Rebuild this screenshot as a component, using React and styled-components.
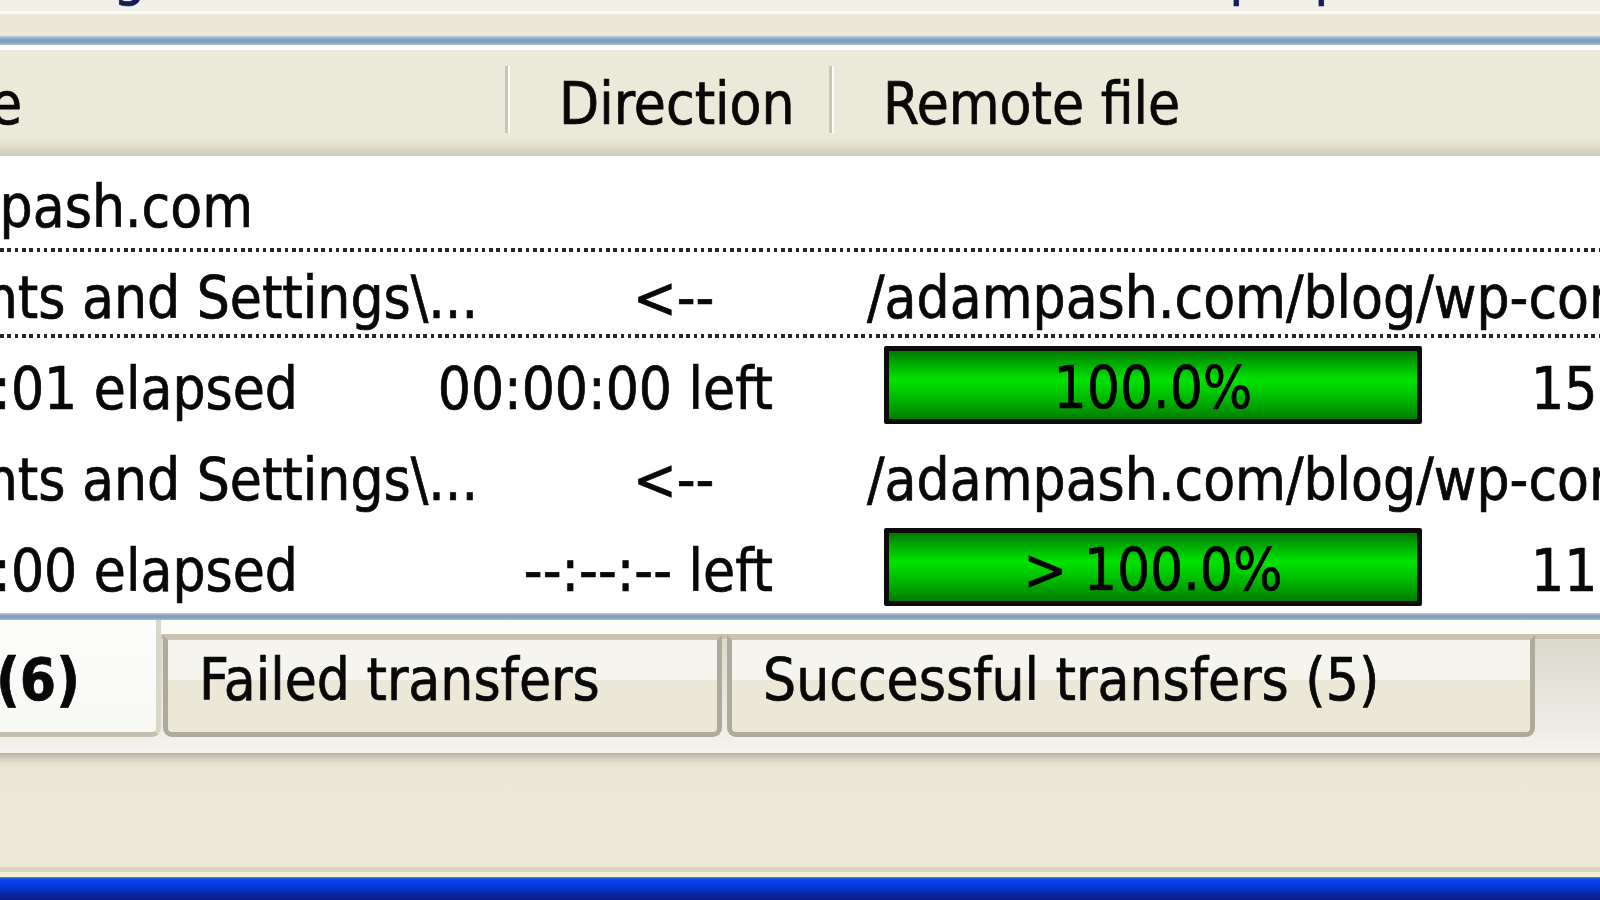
import React from "react";
import styled, { createGlobalStyle, css } from "styled-components";

const GlobalStyle = createGlobalStyle`
  html, body { margin: 0; padding: 0; }
  body { width: 1600px; height: 900px; overflow: hidden; background: #ece9d8; }
`;

const Screen = styled.div`
  width: 1600px;
  height: 900px;
  overflow: hidden;
  display: flex;
  flex-direction: column;
  font-family: "DejaVu Sans Condensed", "DejaVu Sans", "Liberation Sans", sans-serif;
  font-stretch: condensed;
  font-size: 58px;
  color: #080808;
  -webkit-text-stroke: 0.7px currentColor;
  background: #ece9d8;
`;

const LogTail = styled.div`
  flex: none;
  height: 11px;
  overflow: hidden;
  display: flex;
  align-items: flex-start;
  white-space: nowrap;
  background: #f1f0e8;
`;

const LogText = styled.span`
  flex: none;
  line-height: 58px;
  margin-top: -55px;
  margin-left: ${(p) => p.$gap}px;
  color: #141c58;
`;

const PaneGap = styled.div`
  flex: none;
  height: 25px;
  background: linear-gradient(#fbfbf8 0 3px, #ebe8d8 3px);
`;

const FrameEdge = styled.div`
  flex: none;
  height: ${(p) => p.$h}px;
  background: linear-gradient(#c3d1e2, #86a2bf 35%, #7f9cb9 60%, #a9bdd4);
`;

const ListBox = styled.div`
  flex: none;
  background: #fff;
  padding: 5px 0 2px;
`;

const Header = styled.div`
  height: 106px;
  display: grid;
  grid-template-columns: 505px 324px 1fr;
  background: linear-gradient(#ebe9d9 0, #ebe9d9 86px, #e4e1d0 94px, #d9d5c3 100px, #cfcbb9 106px);
`;

const HeaderCell = styled.div`
  position: relative;
  display: flex;
  align-items: center;
  white-space: nowrap;
  overflow: hidden;
  padding-top: 2px;
  ${(p) =>
    p.$clipEnd !== undefined
      ? css`
          justify-content: flex-end;
          padding-right: ${p.$clipEnd}px;
        `
      : css`
          padding-left: 54px;
        `}
  ${(p) =>
    p.$divider &&
    css`
      &::before {
        content: "";
        position: absolute;
        left: 0;
        top: 16px;
        width: 5px;
        height: 67px;
        background: linear-gradient(90deg, #c9c6b4 0 3px, #fdfdfb 3px 5px);
      }
    `}
`;

const FileRow = styled.div`
  box-sizing: border-box;
  height: 91px;
  padding-top: 10px;
  display: grid;
  grid-template-columns: 505px 324px 1fr;
  align-items: center;
  white-space: nowrap;
  ${(p) =>
    p.$focused &&
    css`
      background-image: repeating-linear-gradient(90deg, #262626 0 3.6px, transparent 3.6px 7.3px),
        repeating-linear-gradient(90deg, #262626 0 3.6px, transparent 3.6px 7.3px);
      background-size: 100% 4px, 100% 4px;
      background-position: 0 0.5px, 0 87px;
      background-repeat: no-repeat;
    `}
`;

const ProgressRow = styled.div`
  box-sizing: border-box;
  height: 91px;
  padding-top: 10px;
  display: grid;
  grid-template-columns: 320px 480px 622px 1fr;
  align-items: center;
  white-space: nowrap;
`;

const EndCell = styled.div`
  display: flex;
  justify-content: flex-end;
  overflow: hidden;
  padding-right: ${(p) => p.$inset}px;
`;

const StartCell = styled.div`
  display: flex;
  overflow: hidden;
  padding-left: ${(p) => p.$inset}px;
`;

const BarCell = styled.div`
  display: flex;
  padding-left: 84px;
  margin-top: -7px;
`;

const Bar = styled.div`
  box-sizing: border-box;
  width: 538px;
  height: 78px;
  padding-top: 6px;
  border: 5px solid #0c0c0c;
  border-radius: 2px;
  display: flex;
  align-items: center;
  justify-content: center;
  color: #000;
  background: linear-gradient(#007800 0, #00a000 14%, #00e300 42%, #00cc00 58%, #009a00 86%, #007a00 100%);
`;

const TabArea = styled.div`
  flex: none;
  height: 133px;
  display: flex;
  align-items: flex-start;
  background: linear-gradient(#fbfbf8 0 14px, #c6c3b3 14px 19px, #dcd9cd 19px, #eeede6 110px, #f5f4ef 133px);
`;

const Tab = styled.div`
  box-sizing: border-box;
  flex: none;
  width: ${(p) => p.$width}px;
  display: flex;
  align-items: center;
  white-space: nowrap;
  overflow: hidden;
  ${(p) =>
    p.$active
      ? css`
          height: 117px;
          padding-top: 8px;
          justify-content: flex-end;
          padding-right: ${p.$clipEnd}px;
          font-weight: bold;
          background: linear-gradient(#fcfcfb, #f8f8f5);
          border-bottom: 5px solid #c3c0b0;
          border-right: 5px solid #d9d6ca;
          border-bottom-right-radius: 9px;
        `
      : css`
          height: 102px;
          margin-top: 15px;
          margin-left: ${p.$gap}px;
          padding-left: 31px;
          padding-bottom: 12px;
          border: 5px solid #aeab9c;
          border-top-color: #c8c5b5;
          border-radius: 0 0 9px 9px;
          background: linear-gradient(#f5f4ee 0 40px, #ebe8d8 40px);
        `}
`;

const Panel = styled.div`
  flex: none;
  height: 114px;
  background: linear-gradient(#b4b1a1 0, #cdc9b8 4px, #e2dfcf 10px, #ebe8d8 16px, #ece9d8 100%);
`;

const WindowEdge = styled.div`
  flex: none;
  height: 10px;
  background: linear-gradient(#d7d3c0 0 5px, #f3eed5 5px 10px);
`;

const Taskbar = styled.div`
  flex: none;
  height: 23px;
  background: linear-gradient(#6d93f0 0, #2a5fec 1px, #0a44ea 3px, #063be0 8px, #0731c0 13px, #0a24a0 18px, #0b1c8c 23px);
`;

const rows = [
  { kind: "server", local: "ftp.adampash.com" },
  {
    kind: "file",
    local: "C:\\Documents and Settings\\...",
    dir: "<--",
    remote: "/adampash.com/blog/wp-content/uploads/2007/05/",
    focused: true,
  },
  {
    kind: "progress",
    elapsed: "00:00:01 elapsed",
    left: "00:00:00 left",
    pct: "100.0%",
    bytes: "155,648 bytes",
  },
  {
    kind: "file",
    local: "C:\\Documents and Settings\\...",
    dir: "<--",
    remote: "/adampash.com/blog/wp-content/uploads/2007/05/",
  },
  {
    kind: "progress",
    elapsed: "00:00:00 elapsed",
    left: "--:--:-- left",
    pct: "> 100.0%",
    bytes: "11,264 bytes",
  },
];

function Row({ row }) {
  if (row.kind === "server") {
    return (
      <FileRow>
        <EndCell $inset={252}>{row.local}</EndCell>
        <div />
        <div />
      </FileRow>
    );
  }
  if (row.kind === "file") {
    return (
      <FileRow $focused={row.focused}>
        <EndCell $inset={27}>{row.local}</EndCell>
        <StartCell $inset={128}>{row.dir}</StartCell>
        <StartCell $inset={38}>{row.remote}</StartCell>
      </FileRow>
    );
  }
  return (
    <ProgressRow>
      <EndCell $inset={22}>{row.elapsed}</EndCell>
      <EndCell $inset={27}>{row.left}</EndCell>
      <BarCell>
        <Bar>{row.pct}</Bar>
      </BarCell>
      <StartCell $inset={109}>{row.bytes}</StartCell>
    </ProgressRow>
  );
}

export default function App() {
  return (
    <>
      <GlobalStyle />
      <Screen>
        <LogTail>
          <LogText $gap={113}>g</LogText>
          <LogText $gap={1083}>prop</LogText>
        </LogTail>
        <PaneGap />
        <FrameEdge $h={9} />
        <ListBox>
          <Header>
            <HeaderCell $clipEnd={483}>Server / Local file</HeaderCell>
            <HeaderCell $divider>Direction</HeaderCell>
            <HeaderCell $divider>Remote file</HeaderCell>
          </Header>
          {rows.map((r, i) => (
            <Row key={i} row={r} />
          ))}
        </ListBox>
        <FrameEdge $h={7} />
        <TabArea>
          <Tab $active $width={161} $clipEnd={76}>
            Queued files (6)
          </Tab>
          <Tab $width={559} $gap={2}>
            Failed transfers
          </Tab>
          <Tab $width={808} $gap={5}>
            Successful transfers (5)
          </Tab>
        </TabArea>
        <Panel />
        <WindowEdge />
        <Taskbar />
      </Screen>
    </>
  );
}
